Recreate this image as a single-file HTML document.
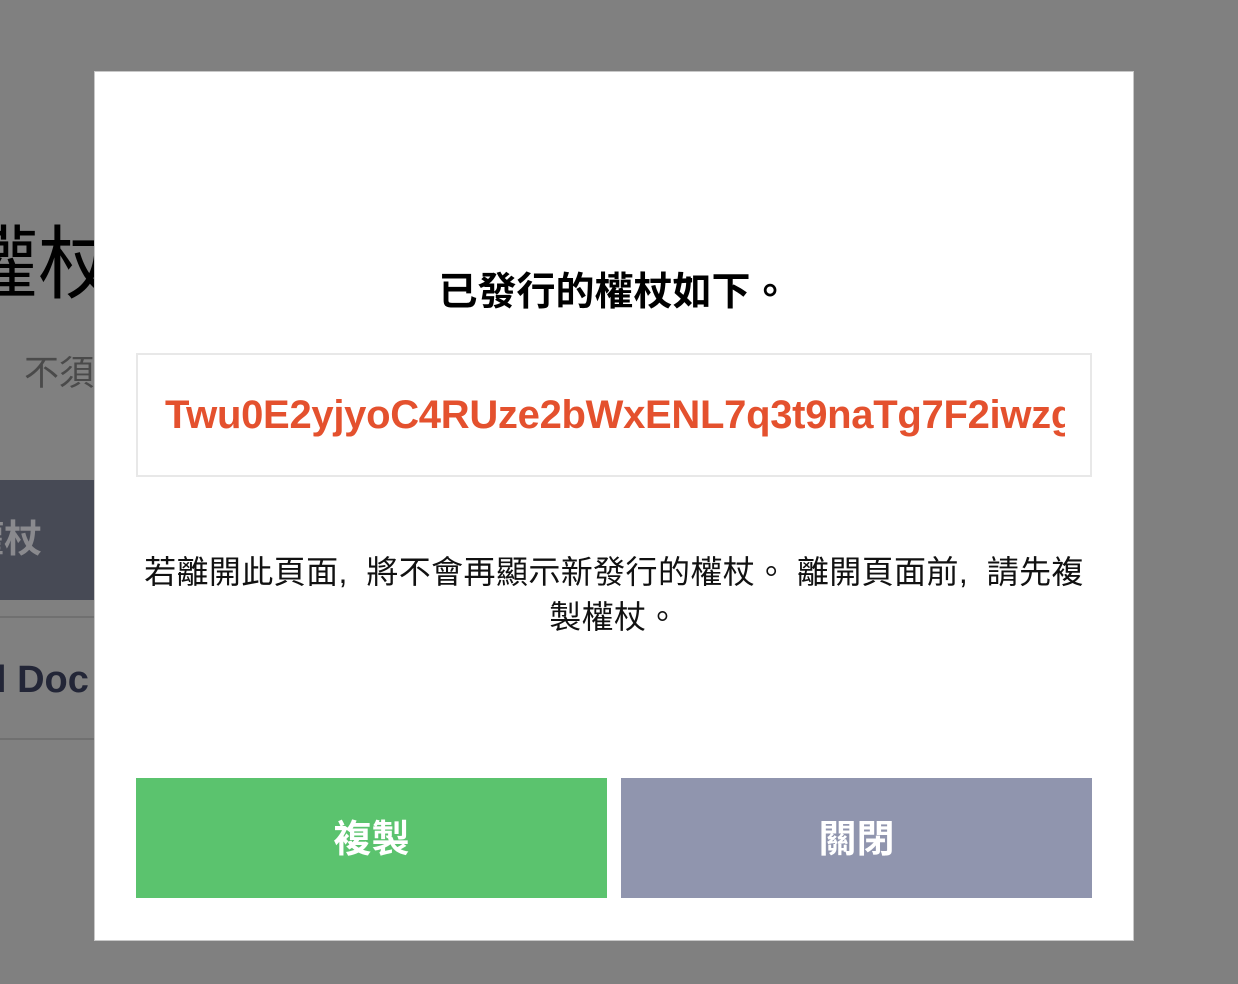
<!DOCTYPE html>
<html><head><meta charset="utf-8"><style>
body{margin:0;width:1238px;height:984px;background:#808080;position:relative;overflow:hidden;font-family:"Liberation Sans","Noto Sans CJK TC",sans-serif}
.abs{position:absolute;white-space:nowrap}
.modal{position:absolute;left:94px;top:71px;width:1038px;height:868px;background:#fff;border:1px solid #c8c8c8;overflow:hidden}
</style></head><body>
<div class="abs" style="left:-42px;top:218px;font-size:80px;color:#000;line-height:94px">權杖</div>
<div class="abs" style="left:24px;top:352px;font-size:35px;color:#4a4a4a;line-height:44px">不須</div>
<div class="abs" style="left:0;top:480px;width:94px;height:120px;background:#474a55"></div>
<div class="abs" style="left:-34px;top:517px;font-size:38px;font-weight:bold;color:#8a8a8e;line-height:46px">權杖</div>
<div class="abs" style="left:0;top:616px;width:94px;height:2px;background:#707070"></div>
<div class="abs" style="left:-4px;top:657px;font-size:38px;font-weight:bold;color:#232637;line-height:46px">l Doc</div>
<div class="abs" style="left:0;top:738px;width:94px;height:2px;background:#707070"></div>
<div class="modal">
 <div class="abs" style="left:0;width:1038px;top:197px;text-align:center;font-size:39px;font-weight:bold;line-height:48px;color:#000">已發行的權杖如下。</div>
 <div class="abs" style="left:41px;top:281px;width:952px;height:120px;border:2px solid #e8e8e8;overflow:hidden">
  <div style="position:absolute;left:27px;top:0;width:900px;overflow:hidden;line-height:120px;font-size:40px;font-weight:bold;color:#e4512e;letter-spacing:-0.3px">Twu0E2yjyoC4RUze2bWxENL7q3t9naTg7F2iwzg8Kd</div>
 </div>
 <div class="abs" style="left:0;width:1038px;top:478px;text-align:center;font-size:32px;letter-spacing:0.4px;line-height:45px;color:#111">若離開此頁面,&nbsp; 將不會再顯示新發行的權杖。 離開頁面前,&nbsp; 請先複<br>製權杖。</div>
 <div class="abs" style="left:41px;top:706px;width:471px;height:120px;background:#5bc36e;color:#fff;font-size:38px;font-weight:bold;text-align:center;line-height:124px">複製</div>
 <div class="abs" style="left:526px;top:706px;width:471px;height:120px;background:#9095ae;color:#fff;font-size:38px;font-weight:bold;text-align:center;line-height:124px">關閉</div>
</div>
</body></html>
